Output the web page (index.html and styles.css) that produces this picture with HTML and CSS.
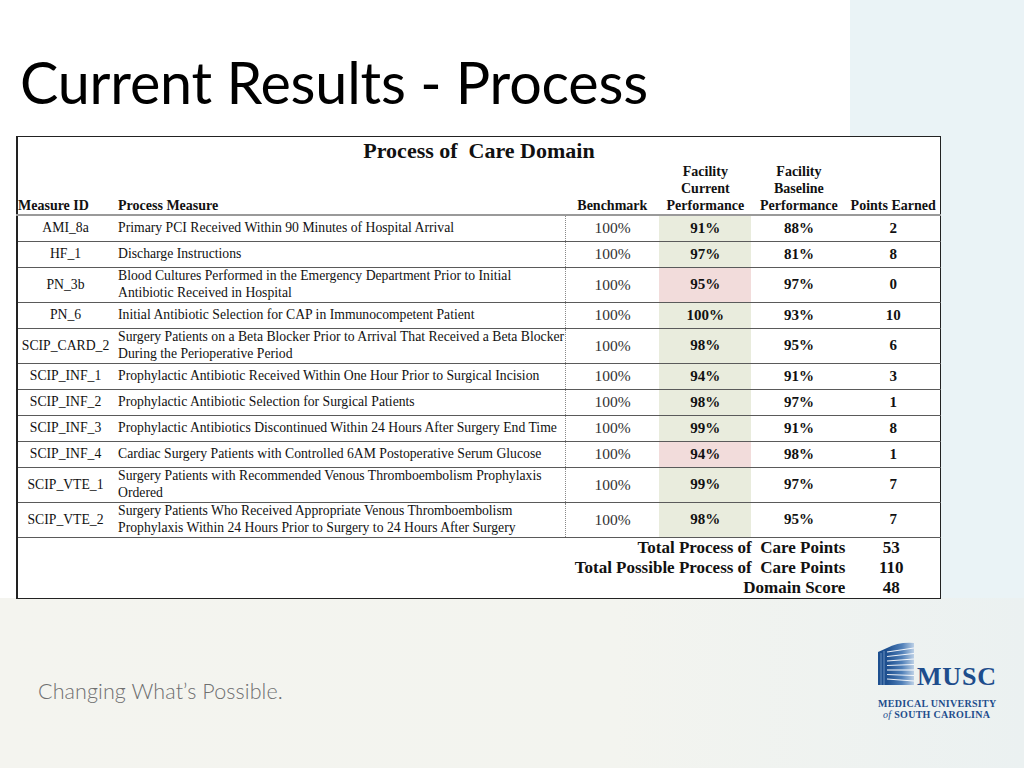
FILE: index.html
```html
<!DOCTYPE html>
<html>
<head>
<meta charset="utf-8">
<link rel="stylesheet" href="styles.css">
</head>
<body>
<div class="slide">
  <div class="top">
    <div class="main">
      <h1 class="title">Current Results - Process</h1>
      <table class="grid">
        <colgroup>
          <col class="c-id"><col class="c-m"><col class="c-b"><col class="c-cur"><col class="c-base"><col class="c-pts">
        </colgroup>
        <thead>
          <tr class="caption-row"><th colspan="6" class="caption">Process of&nbsp; Care Domain</th></tr>
          <tr class="head-row">
            <th class="h-id">Measure ID</th>
            <th class="h-m">Process Measure</th>
            <th>Benchmark</th>
            <th>Facility<br>Current<br>Performance</th>
            <th>Facility<br>Baseline<br>Performance</th>
            <th>Points Earned</th>
          </tr>
        </thead>
        <tbody>
          <tr><td class="id">AMI_8a</td><td class="m">Primary PCI Received Within 90 Minutes of Hospital Arrival</td><td class="b">100%</td><td class="v g">91%</td><td class="v">88%</td><td class="v">2</td></tr>
          <tr><td class="id">HF_1</td><td class="m">Discharge Instructions</td><td class="b">100%</td><td class="v g">97%</td><td class="v">81%</td><td class="v">8</td></tr>
          <tr class="tall"><td class="id">PN_3b</td><td class="m">Blood Cultures Performed in the Emergency Department Prior to Initial Antibiotic Received in Hospital</td><td class="b">100%</td><td class="v r">95%</td><td class="v">97%</td><td class="v">0</td></tr>
          <tr><td class="id">PN_6</td><td class="m">Initial Antibiotic Selection for CAP in Immunocompetent Patient</td><td class="b">100%</td><td class="v g">100%</td><td class="v">93%</td><td class="v">10</td></tr>
          <tr class="tall"><td class="id">SCIP_CARD_2</td><td class="m">Surgery Patients on a Beta Blocker Prior to Arrival That Received a Beta Blocker During the Perioperative Period</td><td class="b">100%</td><td class="v g">98%</td><td class="v">95%</td><td class="v">6</td></tr>
          <tr><td class="id">SCIP_INF_1</td><td class="m">Prophylactic Antibiotic Received Within One Hour Prior to Surgical Incision</td><td class="b">100%</td><td class="v g">94%</td><td class="v">91%</td><td class="v">3</td></tr>
          <tr><td class="id">SCIP_INF_2</td><td class="m">Prophylactic Antibiotic Selection for Surgical Patients</td><td class="b">100%</td><td class="v g">98%</td><td class="v">97%</td><td class="v">1</td></tr>
          <tr><td class="id">SCIP_INF_3</td><td class="m">Prophylactic Antibiotics Discontinued Within 24 Hours After Surgery End Time</td><td class="b">100%</td><td class="v g">99%</td><td class="v">91%</td><td class="v">8</td></tr>
          <tr><td class="id">SCIP_INF_4</td><td class="m">Cardiac Surgery Patients with Controlled 6AM Postoperative Serum Glucose</td><td class="b">100%</td><td class="v r">94%</td><td class="v">98%</td><td class="v">1</td></tr>
          <tr class="tall"><td class="id">SCIP_VTE_1</td><td class="m">Surgery Patients with Recommended Venous Thromboembolism Prophylaxis Ordered</td><td class="b">100%</td><td class="v g">99%</td><td class="v">97%</td><td class="v">7</td></tr>
          <tr class="tall"><td class="id">SCIP_VTE_2</td><td class="m">Surgery Patients Who Received Appropriate Venous Thromboembolism Prophylaxis Within 24 Hours Prior to Surgery to 24 Hours After Surgery</td><td class="b">100%</td><td class="v g">98%</td><td class="v">95%</td><td class="v">7</td></tr>
        </tbody>
        <tfoot>
          <tr class="f1"><td colspan="5" class="fl">Total Process of&nbsp; Care Points</td><td class="fv">53</td></tr>
          <tr class="f2"><td colspan="5" class="fl">Total Possible Process of&nbsp; Care Points</td><td class="fv">110</td></tr>
          <tr class="f3"><td colspan="5" class="fl">Domain Score</td><td class="fv">48</td></tr>
        </tfoot>
      </table>
    </div>
    <div class="side"></div>
  </div>
  <div class="bottom">
    <div class="tagline">Changing What’s Possible.</div>
    <div class="logo">
      <div class="logo-top">
        <svg class="bldg" width="36" height="44" viewBox="0 0 36 44">
          <defs>
            <linearGradient id="bg1" x1="0" y1="0" x2="1" y2="0">
              <stop offset="0" stop-color="#1d4f8f"/>
              <stop offset="0.55" stop-color="#4f7fb8"/>
              <stop offset="1" stop-color="#bcd0e6"/>
            </linearGradient>
          </defs>
          <path d="M0 11 L9 7 L9 44 L0 44 Z" fill="#1d4f8f"/>
          <path d="M9 7 Q20 1 36 2 L36 44 L9 44 Z" fill="url(#bg1)"/>
          <g stroke="#ffffff" stroke-width="1.1" opacity="0.9">
            <line x1="9" y1="11" x2="36" y2="7"/>
            <line x1="9" y1="15.5" x2="36" y2="12.5"/>
            <line x1="9" y1="20" x2="36" y2="18"/>
            <line x1="9" y1="24.5" x2="36" y2="23.5"/>
            <line x1="9" y1="29" x2="36" y2="29"/>
            <line x1="9" y1="33.5" x2="36" y2="34.5"/>
            <line x1="9" y1="38" x2="36" y2="40"/>
          </g>
          <g stroke="#7fa2cc" stroke-width="0.8">
            <line x1="3" y1="12" x2="3" y2="44"/>
            <line x1="6" y1="10" x2="6" y2="44"/>
          </g>
        </svg>
        <span class="musc">MUSC</span>
      </div>
      <div class="l1">MEDICAL UNIVERSITY</div>
      <div class="l2"><i>of</i> SOUTH CAROLINA</div>
    </div>
  </div>
</div>
</body>
</html>
```

FILE: styles.css
```css
html, body {
  margin: 0;
  padding: 0;
}
body {
  width: 1024px;
  height: 768px;
  overflow: hidden;
  background: #ffffff;
}
.slide {
  width: 1024px;
  height: 768px;
  display: flex;
  flex-direction: column;
}
.top {
  display: flex;
  height: 598px;
}
.main {
  width: 850px;
  background: #ffffff;
  position: relative;
}
.side {
  width: 174px;
  background: #eaf3f6;
}
.title {
  margin: 0;
  padding: 52px 0 0 20px;
  height: 84px;
  font-family: Lato, "Open Sans", sans-serif;
  font-weight: 400;
  font-size: 57.5px;
  line-height: 60px;
  color: #000;
  letter-spacing: -0.2px;
  white-space: nowrap;
}
.grid {
  position: relative;
  z-index: 1;
  margin-left: 16px;
  width: 925px;
  border-collapse: collapse;
  table-layout: fixed;
  font-family: "Liberation Serif", serif;
  color: #111;
  background: #fff;
  border-left: 2px solid #222;
  border-right: 1px solid #222;
  border-top: 1px solid #222;
  border-bottom: 1px solid #222;
}
.c-id { width: 96px; }
.c-m { width: 452px; }
.c-b { width: 94px; }
.c-cur { width: 92px; }
.c-base { width: 95px; }
.c-pts { width: 94px; }

.grid th, .grid td {
  padding: 0;
}
.caption-row th {
  height: 25px;
  font-size: 22px;
  font-weight: bold;
  text-align: center;
  vertical-align: middle;
  line-height: 24px;
  padding-top: 1px;
}
.head-row th {
  height: 49px;
  font-size: 14px;
  font-weight: bold;
  line-height: 17px;
  vertical-align: bottom;
  text-align: center;
  border-bottom: 2px solid #9a9a9a;
  padding-bottom: 0;
  white-space: nowrap;
}
.head-row th.h-id {
  text-align: left;
  padding-left: 0;
}
.head-row th.h-m {
  text-align: left;
  padding-left: 5px;
}
tbody tr {
  height: 26px;
  border-bottom: 1px solid #5a5a5a;
}
tbody tr.tall {
  height: 35px;
}
tbody td {
  vertical-align: middle;
}
td.id {
  font-size: 13.7px;
  text-align: center;
  white-space: nowrap;
}
td.m {
  font-size: 13.7px;
  line-height: 16.5px;
  padding-left: 5px;
  padding-right: 0;
  border-right: 1px dotted #888;
  white-space: normal;
}
td.b {
  font-size: 15.5px;
  text-align: center;
  color: #333;
}
td.v {
  font-size: 15px;
  font-weight: bold;
  text-align: center;
}
td.g { background: #e9ecdd; }
td.r { background: #f2dcdb; }

tfoot tr td {
  font-size: 17px;
  font-weight: bold;
  line-height: 20px;
}
td.fl {
  text-align: right;
  padding-right: 1px;
  white-space: nowrap;
}
td.fv {
  text-align: center;
  padding-right: 4px;
}

.bottom {
  flex: 1;
  display: flex;
  justify-content: space-between;
  background: linear-gradient(90deg, #f4f4ef 0%, #f3f4ef 60%, #ebf1f1 100%);
}
.tagline {
  margin: 80px 0 0 38px;
  font-family: Lato, sans-serif;
  font-weight: 300;
  font-size: 21.5px;
  color: #6f6f6f;
  letter-spacing: 0.1px;
  white-space: nowrap;
}
.logo {
  margin: 43px 22px 0 0;
  width: 124px;
  color: #1e4d8c;
  font-family: "Liberation Serif", serif;
}
.logo-top {
  display: flex;
  align-items: flex-end;
  height: 44px;
}
.bldg {
  flex: none;
}
.musc {
  font-size: 26px;
  line-height: 20px;
  font-weight: bold;
  letter-spacing: 0.8px;
  margin-left: 3px;
  margin-bottom: -2px;
}
.l1 {
  margin-top: 13px;
  font-size: 10px;
  font-weight: bold;
  letter-spacing: 0.3px;
  line-height: 11px;
  white-space: nowrap;
}
.l2 {
  font-size: 10px;
  font-weight: bold;
  letter-spacing: 0.3px;
  line-height: 12px;
  padding-left: 5px;
  white-space: nowrap;
}
.l2 i { font-weight: normal; }
```
